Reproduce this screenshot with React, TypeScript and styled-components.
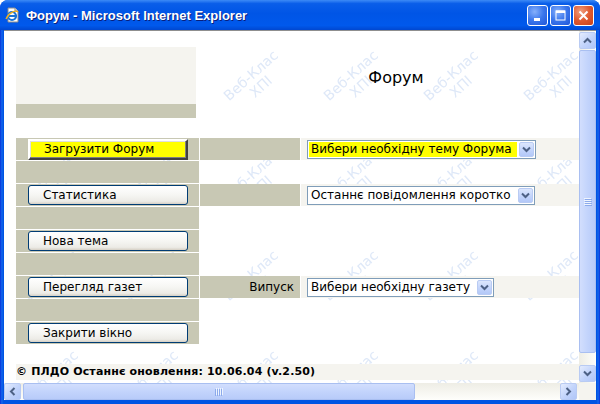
import React from "react";
import styled, { createGlobalStyle } from "styled-components";

const BEIGE = "#f5f4ef";
const OLIVE = "#c8c8b4";

const GlobalStyle = createGlobalStyle`
  html, body {
    margin: 0;
    padding: 0;
    width: 600px;
    height: 404px;
    overflow: hidden;
  }
  body {
    font-family: "DejaVu Sans", Verdana, sans-serif;
    background: #fff;
  }
`;

const Window = styled.div`
  width: 600px;
  height: 404px;
  display: flex;
  flex-direction: column;
  background: linear-gradient(to right, #0831d9 0, #166aee 2px, #0054e3 3px, #0054e3 597px, #166aee 598px, #0831d9 600px);
  border-radius: 8px 8px 0 0;
  overflow: hidden;
`;

const TitleBar = styled.div`
  height: 30px;
  flex: none;
  display: flex;
  align-items: center;
  padding: 0 6px 0 5px;
  background: linear-gradient(#3d8bf6 0%, #0a5ee9 12%, #0055e6 45%, #0059ec 85%, #0047d0 100%);
  gap: 5px;
`;

const TitleText = styled.div`
  flex: 1;
  color: #fff;
  font-family: "Liberation Sans", Arial, sans-serif;
  font-weight: bold;
  font-size: 13px;
  text-shadow: 1px 1px #0a1e7a;
  padding-top: 1px;
`;

const CaptionButtons = styled.div`
  display: flex;
  gap: 2px;
`;

const CaptionButton = styled.div<{ $close?: boolean }>`
  width: 21px;
  height: 21px;
  box-sizing: border-box;
  border: 1px solid #fff;
  border-radius: 3px;
  display: flex;
  align-items: center;
  justify-content: center;
  background: ${p =>
    p.$close
      ? "radial-gradient(circle at 35% 30%, #f0a080 0%, #e05a30 50%, #c8411a 100%)"
      : "radial-gradient(circle at 35% 30%, #86b0fb 0%, #3a76ec 50%, #1f56d8 100%)"};
`;

const Frame = styled.div`
  flex: 1;
  display: flex;
  padding: 0 4px 4px 4px;
  min-height: 0;
`;

const Client = styled.div`
  flex: 1;
  display: grid;
  grid-template-columns: 1fr 17px;
  grid-template-rows: 1fr 17px;
  border-top: 1px solid #8f8f8f;
  background: #fff;
  min-height: 0;
`;

const Viewport = styled.div`
  position: relative;
  overflow: hidden;
  background: #fff;
`;

const Watermark = styled.svg`
  position: absolute;
  inset: 0;
  width: 100%;
  height: 100%;
  z-index: 0;
`;

const Page = styled.div`
  position: relative;
  z-index: 1;
  padding: 16px 0 0 12px;
`;

const Header = styled.div`
  display: flex;
  height: 71px;
`;

const Logo = styled.div`
  flex: none;
  width: 180px;
  display: flex;
  flex-direction: column;
`;

const LogoTop = styled.div`
  flex: 1;
  background: ${BEIGE};
`;

const LogoBar = styled.div`
  height: 14px;
  background: ${OLIVE};
`;

const Heading = styled.div`
  flex: none;
  width: 400px;
  text-align: center;
  padding-top: 21px;
  font-size: 16px;
  color: #000;
`;

const Table = styled.div`
  margin-top: 20px;
  display: grid;
  grid-template-columns: 183px 100px 1fr;
  grid-auto-rows: 22px;
  gap: 1px;
`;

const Cell = styled.div<{ $bg?: string; $right?: boolean }>`
  background: ${p => p.$bg || "transparent"};
  display: flex;
  align-items: center;
  justify-content: ${p => (p.$right ? "flex-end" : "flex-start")};
  padding-right: ${p => (p.$right ? "6px" : "0")};
  font-size: 12px;
  color: #000;
`;

const Button = styled.button<{ $yellow?: boolean }>`
  margin-left: 12px;
  width: 160px;
  height: ${p => (p.$yellow ? "21px" : "20px")};
  box-sizing: border-box;
  padding: 0 0 0 14px;
  text-align: left;
  font-family: "DejaVu Sans", Verdana, sans-serif;
  font-size: 12px;
  color: #000;
  ${p =>
    p.$yellow
      ? `
    background: #ffff00;
    border: 2px solid;
    border-color: #ffffff #404040 #404040 #ffffff;
    box-shadow: inset -1px -1px #808080, inset 1px 1px #dfdfdf;
    border-radius: 0;
  `
      : `
    background: linear-gradient(#ffffff 0%, #f6f6f3 50%, #ecebe6 85%, #d6d0c5 100%);
    border: 1px solid #003c74;
    border-radius: 3px;
  `}
`;

const Combo = styled.div`
  margin-left: 6px;
  height: 19px;
  box-sizing: border-box;
  display: inline-flex;
  align-items: stretch;
  border: 1px solid #7f9db9;
  background: #fff;
  padding: 1px;
  gap: 2px;
`;

const ComboText = styled.span<{ $yellow?: boolean }>`
  background: ${p => (p.$yellow ? "#ffff00" : "#fff")};
  padding: 0 5px 0 2px;
  font-size: 12px;
  line-height: 15px;
  white-space: nowrap;
  color: #000;
`;

const ComboArrow = styled.span`
  width: 15px;
  box-sizing: border-box;
  border: 1px solid #b9cbf3;
  border-radius: 2px;
  background: linear-gradient(#dce6fd, #c1d3fb 60%, #b3c8f8);
  display: flex;
  align-items: center;
  justify-content: center;
`;

const Footer = styled.div`
  margin-top: 20px;
  height: 16px;
  background: ${BEIGE};
  font-size: 11px;
  letter-spacing: 0.15px;
  font-weight: bold;
  line-height: 16px;
  white-space: nowrap;
  color: #000;
`;

const VScroll = styled.div`
  display: flex;
  flex-direction: column;
  padding: 1px 0;
  background: linear-gradient(to right, #eeede5, #fefefb);
`;

const HScroll = styled.div`
  display: flex;
  align-items: center;
  padding: 0 2px 0 0;
  background: linear-gradient(#eeede5, #fefefb);
`;

const Corner = styled.div`
  background: ${BEIGE};
`;

const ScrollBtn = styled.div`
  width: 17px;
  height: 17px;
  flex: none;
  box-sizing: border-box;
  border: 1px solid #b9cbf3;
  border-radius: 2px;
  background: linear-gradient(135deg, #e4ecfe, #c1d3fb 55%, #b0c6f8);
  display: flex;
  align-items: center;
  justify-content: center;
`;

const Thumb = styled.div<{ $horizontal?: boolean }>`
  flex: none;
  box-sizing: border-box;
  border: 1px solid #a9bff1;
  border-radius: 2px;
  display: flex;
  align-items: center;
  justify-content: center;
  width: ${p => (p.$horizontal ? "392px" : "17px")};
  height: ${p => (p.$horizontal ? "17px" : "303px")};
  margin: ${p => (p.$horizontal ? "0 0 0 2px" : "1px 0 0 0")};
  background: ${p =>
    p.$horizontal
      ? "linear-gradient(#d2defd, #c3d4fc 50%, #b8cbf9)"
      : "linear-gradient(to right, #d2defd, #c3d4fc 50%, #b8cbf9)"};
`;

const Spacer = styled.div`
  flex: 1;
`;

const Chevron: React.FC<{ dir: "up" | "down" | "left" | "right" }> = ({ dir }) => {
  const rot = { down: 0, up: 180, left: 90, right: -90 }[dir];
  return (
    <svg width="9" height="9" viewBox="0 0 9 9" style={{ transform: `rotate(${rot}deg)` }}>
      <path d="M1 2.5 L4.5 6 L8 2.5" fill="none" stroke="#4d6185" strokeWidth="2" />
    </svg>
  );
};

const Grip: React.FC<{ horizontal?: boolean }> = ({ horizontal }) => (
  <svg width="8" height="8" viewBox="0 0 8 8" style={{ transform: horizontal ? "rotate(90deg)" : undefined }}>
    {[0, 2, 4, 6].map(y => (
      <g key={y}>
        <rect x="0" y={y} width="7" height="1" fill="#eef4fe" />
        <rect x="1" y={y + 1} width="7" height="1" fill="#8caaeb" />
      </g>
    ))}
  </svg>
);

const IEIcon = () => (
  <svg width="16" height="16" viewBox="0 0 16 16">
    <path d="M3 1 H10 L13 4 V15 H3 Z" fill="#fff" stroke="#8a8a8a" strokeWidth="1" />
    <path d="M10 1 V4 H13" fill="#e8e8e8" stroke="#8a8a8a" strokeWidth="1" />
    <circle cx="7" cy="9" r="4" fill="none" stroke="#1b74d6" strokeWidth="2.2" />
    <path d="M3.5 9 H11" stroke="#1b74d6" strokeWidth="1.8" />
    <path d="M1 12 C4 5, 11 3, 13 5" fill="none" stroke="#f0b020" strokeWidth="1.3" />
  </svg>
);

const rows: Array<[React.ReactNode, React.ReactNode, React.ReactNode, boolean]> = [
  [<Button $yellow>Загрузити Форум</Button>, null, <Combo><ComboText $yellow>Вибери необхідну тему Форума</ComboText><ComboArrow><Chevron dir="down" /></ComboArrow></Combo>, true],
  [null, null, null, false],
  [<Button>Статистика</Button>, null, <Combo><ComboText>Останнє повідомлення коротко</ComboText><ComboArrow><Chevron dir="down" /></ComboArrow></Combo>, true],
  [null, null, null, false],
  [<Button>Нова тема</Button>, null, null, false],
  [null, null, null, false],
  [<Button>Перегляд газет</Button>, "Випуск", <Combo><ComboText>Вибери необхідну газету</ComboText><ComboArrow><Chevron dir="down" /></ComboArrow></Combo>, true],
  [null, null, null, false],
  [<Button>Закрити вікно</Button>, null, null, false],
];

export default function App() {
  return (
    <>
      <GlobalStyle />
      <Window>
        <TitleBar>
          <IEIcon />
          <TitleText>Форум - Microsoft Internet Explorer</TitleText>
          <CaptionButtons>
            <CaptionButton>
              <svg width="13" height="13" viewBox="0 0 13 13">
                <rect x="3" y="9" width="6" height="3" fill="#fff" />
              </svg>
            </CaptionButton>
            <CaptionButton>
              <svg width="13" height="13" viewBox="0 0 13 13">
                <rect x="2" y="2" width="9" height="9" fill="none" stroke="#fff" strokeWidth="1" />
                <rect x="2" y="1.5" width="9" height="2.5" fill="#fff" />
              </svg>
            </CaptionButton>
            <CaptionButton $close>
              <svg width="13" height="13" viewBox="0 0 13 13">
                <path d="M2.5 2.5 L10.5 10.5 M10.5 2.5 L2.5 10.5" stroke="#fff" strokeWidth="2" />
              </svg>
            </CaptionButton>
          </CaptionButtons>
        </TitleBar>
        <Frame>
          <Client>
            <Viewport>
              <Watermark aria-hidden="true">
                <defs>
                  <pattern id="wm" width="100" height="100" patternUnits="userSpaceOnUse">
                    <g transform="translate(50 48) rotate(-42)" fill="#dee8f8" fontFamily="DejaVu Sans, sans-serif" fontSize="14" textAnchor="middle">
                      <text x="0" y="0">Веб-Клас</text>
                      <text x="0" y="15">ХПІ</text>
                    </g>
                  </pattern>
                </defs>
                <rect width="100%" height="100%" fill="url(#wm)" />
              </Watermark>
              <Page>
                <Header>
                  <Logo>
                    <LogoTop />
                    <LogoBar />
                  </Logo>
                  <Heading>Форум</Heading>
                </Header>
                <Table>
                  {rows.map(([a, b, c, band], i) => (
                    <React.Fragment key={i}>
                      <Cell $bg={OLIVE}>{a}</Cell>
                      <Cell $bg={band ? OLIVE : undefined} $right>{b}</Cell>
                      <Cell $bg={band ? BEIGE : undefined}>{c}</Cell>
                    </React.Fragment>
                  ))}
                </Table>
                <Footer>© ПЛДО Останнє оновлення: 10.06.04 (v.2.50)</Footer>
              </Page>
            </Viewport>
            <VScroll>
              <ScrollBtn><Chevron dir="up" /></ScrollBtn>
              <Thumb><Grip /></Thumb>
              <Spacer />
              <ScrollBtn><Chevron dir="down" /></ScrollBtn>
            </VScroll>
            <HScroll>
              <ScrollBtn><Chevron dir="left" /></ScrollBtn>
              <Thumb $horizontal><Grip horizontal /></Thumb>
              <Spacer />
              <ScrollBtn><Chevron dir="right" /></ScrollBtn>
            </HScroll>
            <Corner />
          </Client>
        </Frame>
      </Window>
    </>
  );
}
